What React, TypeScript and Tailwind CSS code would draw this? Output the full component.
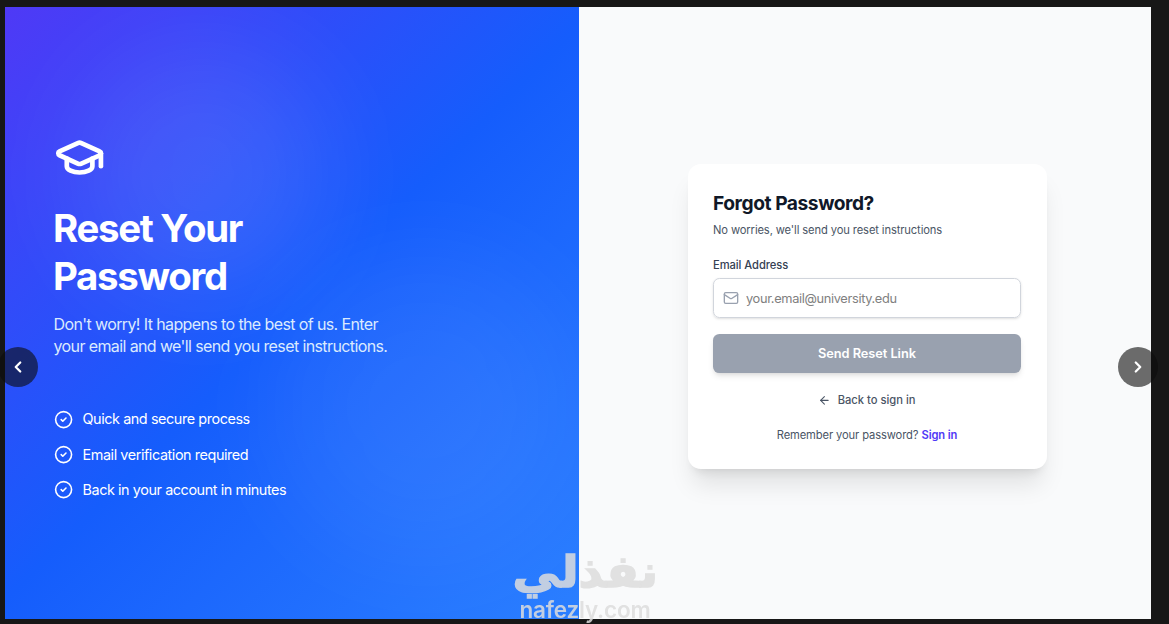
import { ArrowLeft, CheckCircle2, ChevronLeft, ChevronRight, GraduationCap, Mail } from "lucide-react";

const features = [
  "Quick and secure process",
  "Email verification required",
  "Back in your account in minutes",
];

function BrandPanel() {
  return (
    <section className="relative w-[574px] shrink-0 overflow-hidden bg-[linear-gradient(135deg,#4f39f6_0%,#155dfc_50%,#2b7fff_100%)] pl-[49px] pt-[125px] text-white">
      <div className="absolute left-[72px] top-[42px] size-[250px] rounded-full bg-white/9 blur-[51px]" />
      <div className="absolute left-[270px] top-[250px] size-[300px] rounded-full bg-white/6 blur-[51px]" />

      <div className="relative">
        <GraduationCap className="size-[51.2px]" strokeWidth={2.2} />
        <h1 className="mt-[20.8px] -ml-px whitespace-nowrap text-[38.4px] font-bold leading-[48px] tracking-[-1.3px]">
          Reset Your
          <br />
          Password
        </h1>
        <p className="mt-[12.6px] -ml-[0.5px] whitespace-nowrap text-[16px] leading-[22.4px] tracking-[-0.61px] text-[#dbeafe]">
          Don't worry! It happens to the best of us. Enter
          <br />
          your email and we'll send you reset instructions.
        </p>
        <ul className="mt-[50.6px] -ml-[0.3px] flex flex-col gap-[12.8px]">
          {features.map((text) => (
            <li key={text} className="flex h-[22.4px] items-center gap-[9.6px]">
              <CheckCircle2 className="size-[19.2px]" strokeWidth={2} />
              <span className="whitespace-nowrap text-[14.4px] tracking-[-0.42px]">{text}</span>
            </li>
          ))}
        </ul>
      </div>
    </section>
  );
}

function ResetForm() {
  return (
    <div className="mt-[157px] ml-[109px] h-[305px] w-[359px] rounded-[13px] bg-white px-[25px] pt-[27px] shadow-[0_20px_25px_-5px_rgba(0,0,0,0.1),0_8px_10px_-6px_rgba(0,0,0,0.1)]">
      <h2 className="whitespace-nowrap text-[19.2px] font-bold leading-6 tracking-[-0.45px] text-[#101828]">
        Forgot Password?
      </h2>
      <p className="mt-[7px] whitespace-nowrap text-[11.2px] leading-4 tracking-[-0.12px] text-[#4a5565]">
        No worries, we'll send you reset instructions
      </p>
      <label className="mt-[19px] block whitespace-nowrap text-[11.2px] font-medium leading-4 tracking-[-0.06px] text-[#364153]">
        Email Address
      </label>
      <div className="mt-[5px] flex h-10 w-[308px] items-center gap-[7px] rounded-[6.4px] border border-[#d1d5dc] pl-[9px] shadow-sm">
        <Mail className="size-4 text-[#99a1af]" strokeWidth={2} />
        <input
          className="w-60 bg-transparent pt-px text-[12.8px] tracking-[-0.34px] text-[#364153] outline-none placeholder:text-[#808080]"
          type="email"
          placeholder="your.email@university.edu"
        />
      </div>
      <button className="mt-4 h-[39px] w-[308px] rounded-[6.4px] bg-[#99a1af] text-[12.8px] font-semibold tracking-[-0.06px] text-white shadow-md">
        Send Reset Link
      </button>
      <a className="mt-[19px] flex h-4 w-[308px] items-center justify-center gap-[6.4px] text-[11.2px] font-medium text-[#4a5565]">
        <ArrowLeft className="size-[12.8px]" strokeWidth={2} />
        Back to sign in
      </a>
      <p className="mt-[19px] w-[308px] whitespace-nowrap text-center text-[11.2px] leading-4 tracking-[-0.12px] text-[#4a5565]">
        Remember your password? <a className="font-semibold text-[#4f39f6]">Sign in</a>
      </p>
    </div>
  );
}

function Watermark() {
  return (
    <div className="absolute left-[505px] top-[546px] flex h-[78px] w-[160px] flex-col items-center text-[#dddddd] opacity-85">
      <div
        dir="rtl"
        className="h-[54px] shrink-0 scale-x-108 whitespace-nowrap font-['DejaVu_Sans',sans-serif] text-[44px] font-bold leading-[52px] [-webkit-text-stroke:1.5px_#dddddd]"
      >
        نفذلي
      </div>
      <div className="shrink-0 whitespace-nowrap text-[22.5px] font-semibold leading-[20px] tracking-[-0.2px]">
        nafezly.com
      </div>
    </div>
  );
}

export default function App() {
  return (
    <main className="relative flex h-[624px] w-[1169px] overflow-hidden bg-[#171717] pb-[5px] pl-[5px] pr-[18px] pt-[7px] font-[Inter,sans-serif]">
      <BrandPanel />
      <section className="flex-1 bg-[#f9fafb]">
        <ResetForm />
      </section>

      <Watermark />

      <button className="absolute left-[-2px] top-[347px] flex size-10 items-center justify-center rounded-full bg-[#0c0c0c]/60 text-white">
        <ChevronLeft className="size-[18px]" strokeWidth={3} />
      </button>
      <button className="absolute left-[1118px] top-[347px] flex size-10 items-center justify-center rounded-full bg-[#0c0c0c]/60 text-white">
        <ChevronRight className="size-[18px]" strokeWidth={3} />
      </button>
    </main>
  );
}
